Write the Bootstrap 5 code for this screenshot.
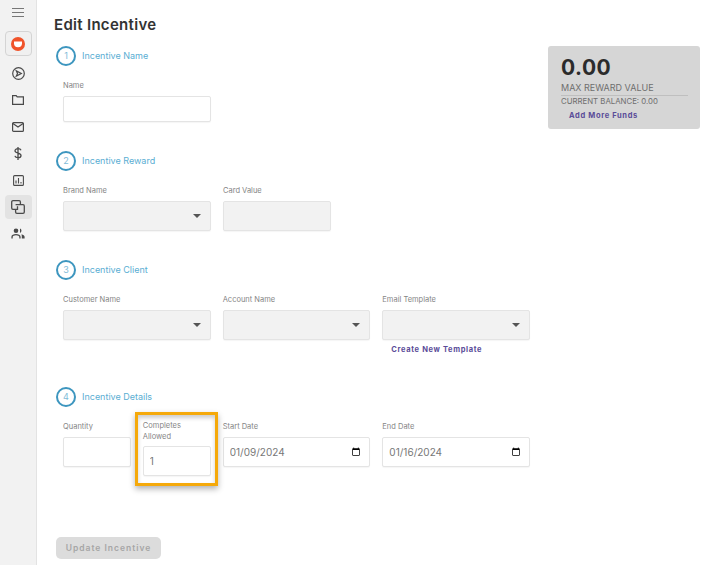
<!DOCTYPE html>
<html lang="en">
  <head>
    <meta charset="UTF-8" />
    <meta name="viewport" content="width=device-width, initial-scale=1.0" />
    <title>Edit Incentive</title>
    <link
      href="https://cdn.jsdelivr.net/npm/bootstrap@5.3.0/dist/css/bootstrap.min.css"
      rel="stylesheet"
    />
    <style>
      html,
      body {
        height: 565px;
        overflow: hidden;
      }
      body {
        font-family: Inter, "Liberation Sans", sans-serif;
        color: #555;
        background: #fff;
      }
      .side-rail {
        width: 37px;
        height: 565px;
        background: #f2f2f2;
        border-right: 1px solid #e3e3e3;
        padding-top: 5px;
      }
      .rail-item {
        width: 27px;
        height: 26.7px;
        margin-left: 4.5px;
        color: #4a4a4a;
        border-radius: 4px;
        border: 1px solid transparent;
      }
      .rail-item.rail-menu {
        height: 15px;
        margin-bottom: 11px;
        color: #777;
      }
      .rail-item.rail-logo {
        background: #f0f0f0;
        border-color: #d4d4d4;
        height: 25px;
        margin-bottom: 4px;
      }
      .rail-item.rail-active {
        background: #e3e3e3;
        height: 24.300px;
        margin-top: 1.200px;
        margin-bottom: 1.200px;
      }
      .main-area {
        padding: 16px 0 0 17px;
      }
      .page-title {
        font-size: 15px;
        line-height: 17px;
        font-weight: 600;
        color: #333;
        letter-spacing: 0.3px;
        margin: 0 0 13px;
      }
      .form-col {
        width: 476px;
        padding-left: 2px;
      }
      .step-head {
        height: 20px;
        color: #5aaed3;
        font-size: 9px;
      }
      .step-num {
        width: 20px;
        height: 20px;
        border: 2px solid #3d96bf;
        border-radius: 50%;
        color: #7fbcd8;
        font-size: 9px;
        margin-right: 6px;
      }
      .step-body {
        padding: 14px 0 0 7px;
      }
      .step-sec {
        margin-bottom: 29px;
      }
      .field-name {
        display: block;
        font-size: 7.500px;
        line-height: 11px;
        color: #858585;
        margin-bottom: 5px;
      }
      .field-box {
        width: 148px;
      }
      .field-short {
        width: 108px;
      }
      .field-qty {
        width: 68px;
      }
      .field-done {
        width: 68px;
      }
      .form-control.inc-input,
      .form-select.inc-input {
        height: 30px;
        min-height: 0;
        font-size: 10px;
        color: #777;
        border: 1px solid #e4e4e4;
        border-radius: 2px;
        padding: 0 6px;
        box-shadow: 0 1px 1px rgba(0, 0, 0, 0.04);
      }
      .form-control.inc-input:disabled,
      .form-select.inc-input:disabled {
        background-color: #f2f2f2;
      }
      .form-select.inc-input {
        background-image: url("data:image/svg+xml,%3csvg xmlns='http://www.w3.org/2000/svg' viewBox='0 0 8 4'%3e%3cpath fill='%23555' d='M0 0h8L4 4z'/%3e%3c/svg%3e");
        background-size: 8px 4px;
        background-position: right 9px center;
      }
      .inc-name {
        height: 26px !important;
      }
      .field-done .field-name {
        margin-top: -1px;
        margin-bottom: 4px;
      }
      .callout-frame {
        position: absolute;
        left: -8px;
        right: -7px;
        top: -9px;
        bottom: -10px;
        border: 3px solid #f5a90a;
        pointer-events: none;
        box-shadow: 0 3px 6px rgba(0, 0, 0, 0.3), inset 0 3px 4px rgba(0, 0, 0, 0.2);
      }
      .link-purple {
        color: #5a4c98;
        font-size: 7.500px;
        font-weight: 700;
        letter-spacing: 0.650px;
        text-decoration: none;
      }
      .tpl-link {
        display: block;
        line-height: 10px;
        margin: 5px 0 0 9px;
      }
      .sec-client {
        margin-bottom: 32px;
      }
      .sec-details {
        margin-bottom: 0;
      }
      .btn.btn-update {
        margin-top: 61px;
        width: 105px;
        height: 22px;
        padding: 0;
        background: #dcdcdc;
        border: 0;
        border-radius: 5px;
        color: #a6a6a6;
        font-size: 8.500px;
        font-weight: 600;
        letter-spacing: 1px;
        opacity: 1;
      }
      .funds-panel {
        width: 152px;
        height: 83px;
        margin-left: 18px;
        background: #d6d6d6;
        border-radius: 3px;
        padding: 9.500px 12px 0 13px;
      }
      .funds-value {
        font-size: 21px;
        line-height: 24px;
        font-weight: 700;
        color: #2b2b2b;
        letter-spacing: 0.500px;
      }
      .funds-label {
        font-size: 9px;
        line-height: 11px;
        margin-top: 2px;
        padding-bottom: 2px;
        color: #6e6e6e;
        border-bottom: 1px solid #bfbfbf;
      }
      .funds-balance {
        font-size: 7.800px;
        line-height: 11px;
        color: #6e6e6e;
      }
      .funds-add {
        display: block;
        margin: 3px 0 0 8px;
        line-height: 11px;
      }
    </style>
  </head>
  <body>
    <div class="d-flex">
      <nav class="side-rail flex-shrink-0">
        <div class="rail-item rail-menu d-flex align-items-center justify-content-center">
          <svg width="12" height="9" viewBox="0 0 12 9" fill="none" stroke="currentColor" stroke-width="1"><path d="M0 .5h12M0 4.500h12M0 8.500h12" /></svg>
        </div>
        <div class="rail-item rail-logo d-flex align-items-center justify-content-center">
          <svg width="14" height="14" viewBox="0 0 14 14"><circle cx="7" cy="7" r="7" fill="#f0532a" /><path d="M3 4.500h8v1.700a4 4 0 0 1-8 0z" fill="#fff" /></svg>
        </div>
        <div class="rail-item d-flex align-items-center justify-content-center">
          <svg width="13" height="13" viewBox="0 0 13 13" fill="none" stroke="currentColor" stroke-width="1.200"><circle cx="6.500" cy="6.500" r="5.800" /><path d="M4.300 3.900l5 2.600-5 2.600 1.200-2.600z" /></svg>
        </div>
        <div class="rail-item d-flex align-items-center justify-content-center">
          <svg width="12" height="10" viewBox="0 0 12 10" fill="none" stroke="currentColor" stroke-width="1.200"><path d="M.6 9.400V.6h3.600l1 1.300h6.200v7.500z" /></svg>
        </div>
        <div class="rail-item d-flex align-items-center justify-content-center">
          <svg width="12" height="10" viewBox="0 0 12 10" fill="none" stroke="currentColor" stroke-width="1.200"><rect x=".6" y=".6" width="10.800" height="8.800" rx="1" /><path d="M.9 1.400l5.100 3.600 5.100-3.600" /></svg>
        </div>
        <div class="rail-item d-flex align-items-center justify-content-center">
          <svg width="8" height="13" viewBox="0 0 8 13" fill="none" stroke="currentColor" stroke-width="1.300"><path d="M7 3.200C6.600 2 5.400 1.700 4 1.700 2.400 1.700 1 2.400 1 3.800c0 3 6 1.500 6 4.600C7 9.900 5.600 10.700 4 10.700c-1.500 0-2.700-.5-3.100-1.800M4 0v13" /></svg>
        </div>
        <div class="rail-item d-flex align-items-center justify-content-center">
          <svg width="11" height="11" viewBox="0 0 11 11" fill="none" stroke="currentColor" stroke-width="1.100"><rect x=".6" y=".6" width="9.800" height="9.800" rx="1" /><path d="M3 8.500V5.500M5.500 8.500V3M8 8.500V7" /></svg>
        </div>
        <div class="rail-item rail-active d-flex align-items-center justify-content-center">
          <svg width="14" height="14" viewBox="0 0 14 14" fill="none" stroke="currentColor" stroke-width="1.300"><path d="M9.400 4.500V2A1.300 1.300 0 0 0 8.100.7H2A1.300 1.300 0 0 0 .7 2v6.100A1.300 1.300 0 0 0 2 9.400h4.500V6.200" /><path d="M4.600 4.600H12A1.300 1.300 0 0 1 13.300 5.900V12A1.300 1.300 0 0 1 12 13.300H5.900A1.300 1.300 0 0 1 4.600 12V9.400" /></svg>
        </div>
        <div class="rail-item d-flex align-items-center justify-content-center">
          <svg width="14" height="11" viewBox="0 0 14 11" fill="currentColor"><circle cx="5" cy="2.700" r="2.300" /><path d="M.4 10.500V8.800C.4 7 2.700 6 5 6s4.600 1 4.600 2.800v1.700H8.300V9c0-1-1.500-1.700-3.300-1.700S1.700 8 1.700 9v1.500z" /><path d="M9 .6a2.300 2.300 0 0 1 0 4.300zM10.500 6.200c1.700.4 3.100 1.200 3.100 2.600v1.700h-2.800V8.800c0-1-.1-1.800-.3-2.600z" /></svg>
        </div>
      </nav>

      <main class="main-area flex-grow-1">
        <h1 class="page-title">Edit Incentive</h1>
        <div class="d-flex align-items-start">
          <form class="form-col flex-shrink-0">
            <section class="step-sec">
              <div class="step-head d-flex align-items-center">
                <span class="step-num d-flex align-items-center justify-content-center">1</span>Incentive Name
              </div>
              <div class="step-body">
                <div class="field-box">
                  <label class="field-name">Name</label>
                  <input type="text" class="form-control inc-input inc-name" />
                </div>
              </div>
            </section>

            <section class="step-sec">
              <div class="step-head d-flex align-items-center">
                <span class="step-num d-flex align-items-center justify-content-center">2</span>Incentive Reward
              </div>
              <div class="step-body">
                <div class="d-flex gap-2 field-row">
                  <div class="field-box">
                    <label class="field-name">Brand Name</label>
                    <select class="form-select inc-input" disabled><option></option></select>
                  </div>
                  <div class="field-short ms-1">
                    <label class="field-name">Card Value</label>
                    <input type="text" class="form-control inc-input" disabled />
                  </div>
                </div>
              </div>
            </section>

            <section class="step-sec sec-client">
              <div class="step-head d-flex align-items-center">
                <span class="step-num d-flex align-items-center justify-content-center">3</span>Incentive Client
              </div>
              <div class="step-body">
                <div class="d-flex gap-2">
                  <div class="field-box">
                    <label class="field-name">Customer Name</label>
                    <select class="form-select inc-input" disabled><option></option></select>
                  </div>
                  <div class="field-box ms-1">
                    <label class="field-name">Account Name</label>
                    <select class="form-select inc-input" disabled><option></option></select>
                  </div>
                  <div class="field-box ms-1">
                    <label class="field-name">Email Template</label>
                    <select class="form-select inc-input" disabled><option></option></select>
                    <a href="#" class="link-purple tpl-link">Create New Template</a>
                  </div>
                </div>
              </div>
            </section>

            <section class="step-sec sec-details">
              <div class="step-head d-flex align-items-center">
                <span class="step-num d-flex align-items-center justify-content-center">4</span>Incentive Details
              </div>
              <div class="step-body">
                <div class="d-flex gap-2 align-items-start">
                  <div class="field-qty">
                    <label class="field-name">Quantity</label>
                    <input type="text" class="form-control inc-input" />
                  </div>
                  <div class="field-done position-relative ms-1">
                    <label class="field-name">Completes Allowed</label>
                    <input type="text" class="form-control inc-input" value="1" />
                    <span class="callout-frame"></span>
                  </div>
                  <div class="field-box ms-1">
                    <label class="field-name">Start Date</label>
                    <input type="date" class="form-control inc-input" value="2024-01-09" />
                  </div>
                  <div class="field-box ms-1">
                    <label class="field-name">End Date</label>
                    <input type="date" class="form-control inc-input" value="2024-01-16" />
                  </div>
                </div>
              </div>
            </section>

            <button type="button" class="btn btn-update" disabled>Update Incentive</button>
          </form>

          <aside class="funds-panel flex-shrink-0">
            <div class="funds-value">0.00</div>
            <div class="funds-label">MAX REWARD VALUE</div>
            <div class="funds-balance">CURRENT BALANCE: 0.00</div>
            <a href="#" class="link-purple funds-add">Add More Funds</a>
          </aside>
        </div>
      </main>
    </div>

    <script src="https://cdn.jsdelivr.net/npm/bootstrap@5.3.0/dist/js/bootstrap.bundle.min.js"></script>
  </body>
</html>
